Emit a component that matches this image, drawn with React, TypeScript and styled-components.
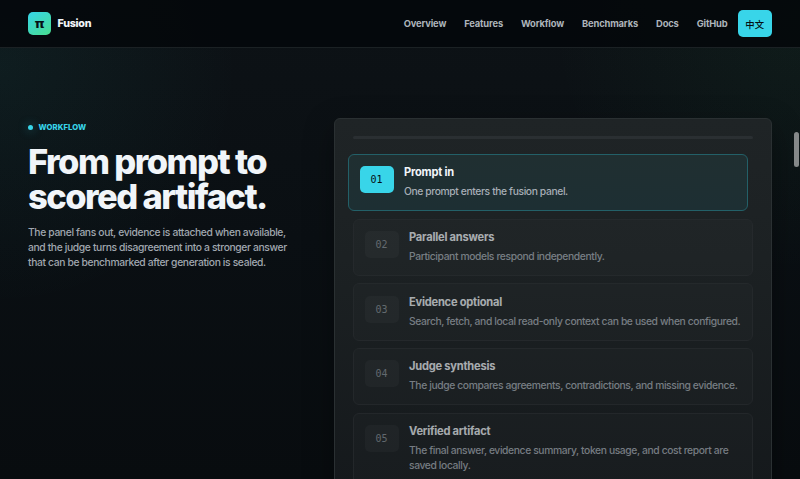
import styled, { createGlobalStyle, css } from "styled-components";

const links = ["Overview", "Features", "Workflow", "Benchmarks", "Docs", "GitHub"];

const steps = [
  { title: "Prompt in", text: "One prompt enters the fusion panel." },
  { title: "Parallel answers", text: "Participant models respond independently." },
  {
    title: "Evidence optional",
    text: "Search, fetch, and local read-only context can be used when configured.",
  },
  {
    title: "Judge synthesis",
    text: "The judge compares agreements, contradictions, and missing evidence.",
  },
  {
    title: "Verified artifact",
    text: "The final answer, evidence summary, token usage, and cost report are saved locally.",
  },
];

const App = () => {
  return (
    <StyledPage>
      <GlobalStyle />
      <StyledHeader>
        <StyledBrand>
          <StyledLogo>π</StyledLogo>
          Fusion
        </StyledBrand>
        <StyledNav>
          <StyledLinks>
            {links.map((link) => (
              <StyledLink key={link}>{link}</StyledLink>
            ))}
          </StyledLinks>
          <StyledLang>中文</StyledLang>
        </StyledNav>
      </StyledHeader>
      <StyledSection>
        <StyledIntro>
          <StyledEyebrow>Workflow</StyledEyebrow>
          <StyledHeading>From prompt to scored artifact.</StyledHeading>
          <StyledLead>
            The panel fans out, evidence is attached when available, and the judge turns
            disagreement into a stronger answer that can be benchmarked after generation is
            sealed.
          </StyledLead>
        </StyledIntro>
        <StyledPanel>
          <StyledTrack />
          {steps.map((step, i) => (
            <StyledStep key={step.title} $active={i === 0}>
              <StyledNumber $active={i === 0}>0{i + 1}</StyledNumber>
              <div>
                <StyledStepTitle>{step.title}</StyledStepTitle>
                <StyledStepText>{step.text}</StyledStepText>
              </div>
            </StyledStep>
          ))}
        </StyledPanel>
      </StyledSection>
      <StyledScrollThumb />
    </StyledPage>
  );
};

const GlobalStyle = createGlobalStyle`
  * {
    box-sizing: border-box;
  }
  body {
    margin: 0;
    overflow: hidden;
    background: #070b0e;
    font-family: Inter, "Noto Sans CJK SC", sans-serif;
  }
`;

const StyledPage = styled.div`
  height: 479px;
  overflow: hidden;
  color: #f1f5f9;
  background:
    radial-gradient(circle at 0% 14%, rgba(56, 216, 200, 0.06), transparent 240px),
    radial-gradient(circle at 100% 5%, rgba(70, 220, 120, 0.05), transparent 250px),
    linear-gradient(180deg, #0d1216 0%, #0a0f13 50%, #080c0f 100%);
`;

const StyledHeader = styled.header`
  height: 48px;
  padding: 0 28px;
  display: flex;
  align-items: center;
  justify-content: space-between;
  background: rgba(4, 7, 10, 0.86);
  border-bottom: 1px solid #1b2124;
`;

const StyledBrand = styled.div`
  display: flex;
  align-items: center;
  gap: 6.5px;
  font-size: 10.7px;
  font-weight: 800;
  letter-spacing: -0.25px;
`;

const StyledLogo = styled.span`
  width: 23px;
  height: 23px;
  display: grid;
  place-items: center;
  border-radius: 5px;
  color: #061014;
  font-family: "DejaVu Sans", sans-serif;
  font-size: 13px;
  font-weight: 700;
  line-height: 1;
  background: linear-gradient(145deg, #36d5e9, #48dd8e);
`;

const StyledNav = styled.nav`
  display: flex;
  align-items: center;
  gap: 10px;
`;

const StyledLinks = styled.div`
  display: flex;
  gap: 18px;
`;

const StyledLink = styled.a`
  color: #adb4bb;
  font-size: 9.4px;
  font-weight: 700;
  letter-spacing: -0.16px;
`;

const StyledLang = styled.a`
  width: 34.5px;
  height: 27px;
  display: grid;
  place-items: center;
  border-radius: 5px;
  color: #061014;
  background: #38d5e9;
  font-size: 9.4px;
  font-weight: 500;
`;

const StyledSection = styled.section`
  padding: 70px 28px 0;
  display: grid;
  grid-template-columns: 1fr 438px;
  gap: 18px;
  align-items: start;
`;

const StyledIntro = styled.div`
  padding-top: 3px;
`;

const StyledEyebrow = styled.div`
  display: flex;
  align-items: center;
  gap: 5.5px;
  height: 12px;
  color: #38d5e9;
  font-size: 7.7px;
  font-weight: 800;
  letter-spacing: 0.08px;
  text-transform: uppercase;
  &::before {
    content: "";
    width: 5px;
    height: 5px;
    border-radius: 50%;
    background: #38d5e9;
    box-shadow: 0 0 10px rgba(56, 213, 233, 0.5);
  }
`;

const StyledHeading = styled.h1`
  margin: 11px 0 0;
  font-size: 34.5px;
  line-height: 35px;
  font-weight: 780;
  letter-spacing: -1.55px;
`;

const StyledLead = styled.p`
  margin: 10.5px 0 0;
  max-width: 264px;
  color: #a0a7af;
  font-size: 10.3px;
  font-weight: 450;
  line-height: 15.3px;
  letter-spacing: -0.36px;
`;

const StyledPanel = styled.div`
  height: 400px;
  padding: 17px 18px 17px 17.5px;
  border: 1px solid #2a3032;
  border-radius: 6px;
  background: linear-gradient(180deg, #1f2426 0%, #1c2123 35%, #14181b 100%);
  box-shadow: 0 10px 30px rgba(0, 0, 0, 0.35);
`;

const StyledTrack = styled.div`
  height: 3px;
  margin-bottom: 15px;
  border-radius: 2px;
  background: #2a2f32;
`;

const StyledStep = styled.div<{ $active: boolean }>`
  margin-bottom: 7.4px;
  padding: 11.3px 4px 10.6px 11px;
  display: grid;
  grid-template-columns: 34px 1fr;
  gap: 10.5px;
  border: 1px solid #2a2e31;
  border-radius: 6px;
  background: rgba(255, 255, 255, 0.025);
  opacity: 0.66;
  ${({ $active }) =>
    $active &&
    css`
      opacity: 1;
      transform: translateX(-5px);
      border-color: #236068;
      background: linear-gradient(180deg, #202f31, #1d2f33);
    `}
`;

const StyledNumber = styled.span<{ $active: boolean }>`
  height: 27px;
  display: grid;
  place-items: center;
  border-radius: 5px;
  font-family: "DejaVu Sans Mono", monospace;
  font-size: 10px;
  color: ${({ $active }) => ($active ? "#061014" : "#899198")};
  background: ${({ $active }) => ($active ? "#38d5e9" : "rgba(255, 255, 255, 0.045)")};
`;

const StyledStepTitle = styled.h3`
  margin: 0;
  font-size: 11.1px;
  line-height: 12.4px;
  font-weight: 700;
  letter-spacing: -0.22px;
`;

const StyledStepText = styled.p`
  margin: 5.7px 0 0;
  color: #a7aeb6;
  font-size: 10.3px;
  font-weight: 450;
  line-height: 15.3px;
  letter-spacing: -0.38px;
`;

const StyledScrollThumb = styled.div`
  position: fixed;
  top: 132px;
  right: 1px;
  width: 5px;
  height: 35px;
  border-radius: 3px;
  background: #858889;
`;

export default App;
